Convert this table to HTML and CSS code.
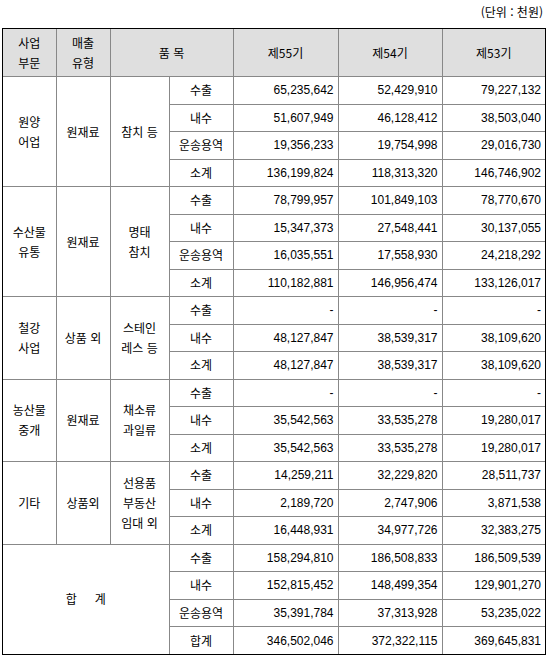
FILE: index.html
```html
<!DOCTYPE html>
<html lang="ko">
<head>
<meta charset="utf-8">
<link rel="stylesheet" href="styles.css">
</head>
<body>
<div class="unit">(단위 : 천원)</div>
<div class="frame">
<table class="sales">
<colgroup>
<col class="c1"><col class="c2"><col class="c3"><col class="c4"><col class="c5"><col class="c6"><col class="c7">
</colgroup>
<thead>
<tr class="head">
<th>사업<br>부문</th>
<th>매출<br>유형</th>
<th colspan="2">품 목</th>
<th>제55기</th>
<th>제54기</th>
<th>제53기</th>
</tr>
</thead>
<tbody>
<tr><td rowspan="4" class="lbl">원양<br>어업</td><td rowspan="4" class="lbl">원재료</td><td rowspan="4" class="lbl">참치 등</td><td class="kind">수출</td><td class="num">65,235,642</td><td class="num">52,429,910</td><td class="num">79,227,132</td></tr>
<tr><td class="kind">내수</td><td class="num">51,607,949</td><td class="num">46,128,412</td><td class="num">38,503,040</td></tr>
<tr><td class="kind">운송용역</td><td class="num">19,356,233</td><td class="num">19,754,998</td><td class="num">29,016,730</td></tr>
<tr><td class="kind">소계</td><td class="num">136,199,824</td><td class="num">118,313,320</td><td class="num">146,746,902</td></tr>

<tr><td rowspan="4" class="lbl">수산물<br>유통</td><td rowspan="4" class="lbl">원재료</td><td rowspan="4" class="lbl">명태<br>참치</td><td class="kind">수출</td><td class="num">78,799,957</td><td class="num">101,849,103</td><td class="num">78,770,670</td></tr>
<tr><td class="kind">내수</td><td class="num">15,347,373</td><td class="num">27,548,441</td><td class="num">30,137,055</td></tr>
<tr><td class="kind">운송용역</td><td class="num">16,035,551</td><td class="num">17,558,930</td><td class="num">24,218,292</td></tr>
<tr><td class="kind">소계</td><td class="num">110,182,881</td><td class="num">146,956,474</td><td class="num">133,126,017</td></tr>

<tr><td rowspan="3" class="lbl">철강<br>사업</td><td rowspan="3" class="lbl">상품 외</td><td rowspan="3" class="lbl">스테인<br>레스 등</td><td class="kind">수출</td><td class="num">-</td><td class="num">-</td><td class="num">-</td></tr>
<tr><td class="kind">내수</td><td class="num">48,127,847</td><td class="num">38,539,317</td><td class="num">38,109,620</td></tr>
<tr><td class="kind">소계</td><td class="num">48,127,847</td><td class="num">38,539,317</td><td class="num">38,109,620</td></tr>

<tr><td rowspan="3" class="lbl">농산물<br>중개</td><td rowspan="3" class="lbl">원재료</td><td rowspan="3" class="lbl">채소류<br>과일류</td><td class="kind">수출</td><td class="num">-</td><td class="num">-</td><td class="num">-</td></tr>
<tr><td class="kind">내수</td><td class="num">35,542,563</td><td class="num">33,535,278</td><td class="num">19,280,017</td></tr>
<tr><td class="kind">소계</td><td class="num">35,542,563</td><td class="num">33,535,278</td><td class="num">19,280,017</td></tr>

<tr><td rowspan="3" class="lbl">기타</td><td rowspan="3" class="lbl">상품외</td><td rowspan="3" class="lbl low">선용품<br>부동산<br>임대 외</td><td class="kind">수출</td><td class="num">14,259,211</td><td class="num">32,229,820</td><td class="num">28,511,737</td></tr>
<tr><td class="kind">내수</td><td class="num">2,189,720</td><td class="num">2,747,906</td><td class="num">3,871,538</td></tr>
<tr><td class="kind">소계</td><td class="num">16,448,931</td><td class="num">34,977,726</td><td class="num">32,383,275</td></tr>

<tr><td rowspan="4" colspan="3" class="lbl total">합<span class="gap"></span>계</td><td class="kind">수출</td><td class="num">158,294,810</td><td class="num">186,508,833</td><td class="num">186,509,539</td></tr>
<tr><td class="kind">내수</td><td class="num">152,815,452</td><td class="num">148,499,354</td><td class="num">129,901,270</td></tr>
<tr><td class="kind">운송용역</td><td class="num">35,391,784</td><td class="num">37,313,928</td><td class="num">53,235,022</td></tr>
<tr><td class="kind">합계</td><td class="num">346,502,046</td><td class="num">372,322,115</td><td class="num">369,645,831</td></tr>
</tbody>
</table>
</div>
</body>
</html>
```
FILE: styles.css
```css
html, body {
  margin: 0;
  padding: 0;
  background: #fff;
}
body {
  font-family: "Noto Sans CJK KR", "Liberation Sans", sans-serif;
  font-size: 12px;
  color: #000;
}
.unit {
  height: 24px;
  line-height: 24px;
  text-align: right;
  padding-right: 5px;
  margin-bottom: 4px;
  font-size: 12px;
}
.frame {
  margin-left: 2px;
  width: 542px;
  border: 1px solid #000;
}
.sales {
  width: 542px;
  table-layout: fixed;
  border-collapse: collapse;
  border-style: hidden;
}
.c1 { width: 53px; }
.c2 { width: 54px; }
.c3 { width: 59px; }
.c4 { width: 64px; }
.c5 { width: 105px; }
.c6 { width: 104px; }
.c7 { width: 103px; }
.sales th, .sales td {
  border: 1px solid #888;
  padding: 0;
  text-align: center;
  vertical-align: middle;
  font-weight: normal;
  line-height: 20px;
  white-space: nowrap;
  overflow: hidden;
}
.head th {
  background: #dfdfdf;
  height: 47px;
}
.sales tbody tr {
  height: 27.5px;
}
.sales td.num {
  text-align: right;
  padding-right: 4px;
  font-family: "Liberation Sans", sans-serif;
}
.low {
  padding-top: 6px;
}
.gap {
  display: inline-block;
  width: 18px;
}
.total {
  padding-right: 6px;
}
```
